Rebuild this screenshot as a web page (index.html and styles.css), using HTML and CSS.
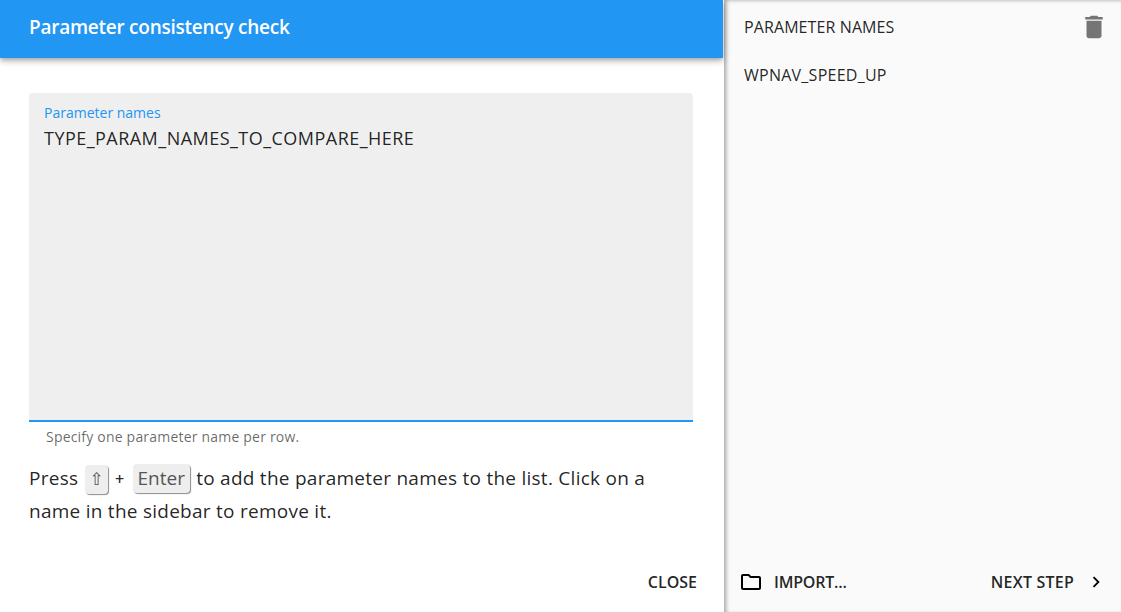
FILE: index.html
```html
<!DOCTYPE html>
<html lang="en">
<head>
    <meta charset="UTF-8">
    <meta name="viewport" content="width=device-width, initial-scale=1.0">
    <title>Parameter consistency check</title>
    <link rel="stylesheet" href="styles.css">
</head>
<body>
    <div class="dialog">
        <main class="wizard">
            <header class="wizard-header">Parameter consistency check</header>
            <div class="wizard-body">
                <div class="text-field">
                    <label class="text-field-label" for="param-names">Parameter names</label>
                    <textarea class="text-field-input" id="param-names" spellcheck="false">TYPE_PARAM_NAMES_TO_COMPARE_HERE</textarea>
                </div>
                <p class="helper-text">Specify one parameter name per row.</p>
                <p class="instructions">Press <kbd class="key key-shift">⇧</kbd> <span class="plus">+</span> <kbd class="key">Enter</kbd> to add the parameter names to the list. Click on a name in the sidebar to remove it.</p>
            </div>
            <footer class="wizard-footer">
                <button class="text-button">CLOSE</button>
            </footer>
        </main>

        <aside class="sidebar">
            <div class="sidebar-header">
                <span>PARAMETER NAMES</span>
                <button class="icon-button" aria-label="Clear list">
                    <svg width="30" height="30" viewBox="0 0 24 24"><path d="M6 19c0 1.100.9 2 2 2h8c1.100 0 2-.9 2-2V7H6v12zM19 4h-3.500l-1-1h-5l-1 1H5v2h14V4z"/></svg>
                </button>
            </div>
            <ul class="param-list">
                <li>WPNAV_SPEED_UP</li>
            </ul>
            <div class="sidebar-footer">
                <button class="text-button import-button">
                    <svg width="24" height="24" viewBox="0 0 24 24"><path d="M9.170 6l2 2H20v10H4V6h5.170M10 4H4c-1.100 0-1.990.9-1.990 2L2 18c0 1.100.9 2 2 2h16c1.100 0 2-.9 2-2V8c0-1.100-.9-2-2-2h-8l-2-2z"/></svg>
                    <span>IMPORT...</span>
                </button>
                <button class="text-button next-button">
                    <span>NEXT STEP</span>
                    <svg width="22" height="22" viewBox="0 0 24 24"><path d="M10 6L8.590 7.410 13.170 12l-4.580 4.590L10 18l6-6z"/></svg>
                </button>
            </div>
        </aside>
    </div>
</body>
</html>
```

FILE: styles.css
```css
* {
    box-sizing: border-box;
}

body {
    margin: 0;
    background-color: #fff;
    color: rgba(0, 0, 0, 0.87);
    font-family: "Open Sans", "Noto Sans", sans-serif;
}

button {
    font-family: inherit;
}

.dialog {
    display: flex;
    gap: 1px;
    width: 1121px;
    height: 612px;
    overflow: hidden;
}

/* Left side */
.wizard {
    display: flex;
    flex-direction: column;
    width: 723px;
    flex-shrink: 0;
}

.wizard-header {
    height: 58px;
    flex-shrink: 0;
    padding-left: 29px;
    background-color: #2196f3;
    color: #fff;
    font-size: 19px;
    font-weight: 600;
    letter-spacing: -0.25px;
    line-height: 54px;
    box-shadow: 0 2px 4px -1px rgba(0,0,0,0.2), 0 4px 5px 0 rgba(0,0,0,0.14), 0 1px 10px 0 rgba(0,0,0,0.12);
    position: relative;
}

.wizard-body {
    flex: 1;
    padding: 35px 30px 0 29px;
}

.text-field {
    display: flex;
    flex-direction: column;
    height: 329px;
    padding: 11px 15px 0;
    background-color: #efefef;
    border-radius: 4px 4px 0 0;
    border-bottom: 2px solid #2196f3;
}

.text-field-label {
    color: #2196f3;
    font-size: 14px;
    line-height: 18px;
}

.text-field-input {
    flex: 1;
    padding: 0;
    margin-top: 3px;
    border: none;
    outline: none;
    resize: none;
    background: none;
    color: inherit;
    font-family: inherit;
    font-size: 18px;
    letter-spacing: 0.47px;
    line-height: 26px;
}

.helper-text {
    margin: 6px 0 0 17px;
    color: rgba(0, 0, 0, 0.6);
    font-size: 14px;
    letter-spacing: 0.2px;
    line-height: 18px;
}

.instructions {
    margin: 16px 0 0;
    font-size: 19px;
    letter-spacing: 0.26px;
    line-height: 32px;
}

.key {
    display: inline-block;
    margin: 0 1px 0 2px;
    padding: 0 5px;
    background-color: #eee;
    border-radius: 4px;
    box-shadow: 1px 1px 1px rgba(0, 0, 0, 0.45);
    color: #555;
    font-family: inherit;
    font-size: 19px;
    letter-spacing: 0;
    line-height: 29px;
    vertical-align: baseline;
}

.key-shift {
    padding: 0 4px;
    font-family: "DejaVu Sans", sans-serif;
    font-size: 17px;
    line-height: 29px;
}

.plus {
    margin: 0 1px;
    font-size: 16px;
    font-weight: 600;
}

.wizard-footer {
    display: flex;
    justify-content: flex-end;
    height: 60px;
    padding: 0 26px 0 0;
}

.text-button {
    display: flex;
    align-items: center;
    gap: 11px;
    padding: 0;
    border: none;
    background: none;
    color: inherit;
    cursor: pointer;
    font-size: 16px;
    font-weight: 600;
    letter-spacing: 0;
}

.wizard-footer .text-button {
    height: 60px;
}

.import-button {
    letter-spacing: -0.2px;
}

.next-button {
    letter-spacing: 0.22px;
}

/* Right side */
.sidebar {
    display: flex;
    flex-direction: column;
    flex: 1;
    background-color: #fafafa;
    box-shadow: inset 3px 1px 4px -1px rgba(0, 0, 0, 0.35);
    padding-left: 20px;
}

.sidebar-header {
    display: flex;
    justify-content: space-between;
    align-items: center;
    height: 54px;
    padding-right: 12px;
    font-size: 16px;
    letter-spacing: 0.1px;
}

.icon-button {
    display: flex;
    padding: 0;
    border: none;
    background: none;
    cursor: pointer;
}

.icon-button svg {
    fill: #757575;
}

.param-list {
    flex: 1;
    margin: 0;
    padding: 0;
    list-style: none;
    font-size: 16px;
    letter-spacing: 0.25px;
    line-height: 42px;
}

.sidebar-footer {
    display: flex;
    justify-content: space-between;
    height: 60px;
    margin-left: -5px;
    padding-right: 14px;
}
```
